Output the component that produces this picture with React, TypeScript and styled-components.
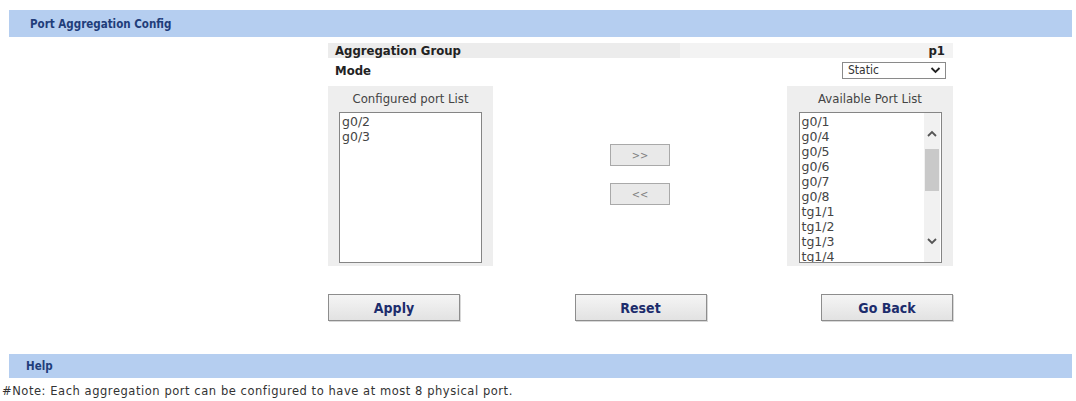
import React from 'react';
import styled, { createGlobalStyle } from 'styled-components';

const GlobalStyle = createGlobalStyle`
  body {
    margin: 0;
    background: #fff;
    font-family: "DejaVu Sans Condensed", "DejaVu Sans", sans-serif;
    color: #222;
  }
`;

const Page = styled.div`
  padding-top: 10px;
`;

const SectionBar = styled.div<{ $indent: number; $height: number }>`
  display: flex;
  align-items: center;
  height: ${(p) => p.$height}px;
  margin: 0 4px 0 9px;
  padding-left: ${(p) => p.$indent}px;
  background: #b5cef0;
  color: #1f3d7a;
  font-size: 11.5px;
  font-weight: bold;
`;

const Form = styled.div`
  width: 625px;
  margin-left: 328px;
`;

const InfoRow = styled.div`
  display: flex;
  height: 15px;
  margin-top: 6px;
  font-size: 13px;
  font-weight: bold;
  line-height: 15px;
`;

const LabelCell = styled.div`
  flex: 0 0 345px;
  padding-left: 7px;
  background: #ececec;
`;

const ValueCell = styled.div`
  flex: 1;
  padding-right: 8px;
  text-align: right;
  background: #f3f3f3;
`;

const ModeRow = styled.div`
  display: flex;
  justify-content: space-between;
  align-items: flex-start;
  padding: 0 7px;
  font-size: 13px;
  font-weight: bold;
  line-height: 15px;
`;

const ModeLabel = styled.span`
  padding-top: 5px;
`;

const Select = styled.div`
  display: flex;
  align-items: center;
  justify-content: space-between;
  box-sizing: border-box;
  width: 104px;
  height: 17px;
  margin-top: 4px;
  padding: 0 4px 0 5px;
  border: 1px solid #8a8a8a;
  background: #fff;
  font-size: 12px;
  font-weight: normal;
  color: #333;
`;

const ListsArea = styled.div`
  display: grid;
  grid-template-columns: 165px 1fr 166px;
  margin-top: 7px;
`;

const Panel = styled.div`
  display: flex;
  flex-direction: column;
  align-items: center;
  height: 180px;
  background: #eeeeee;
`;

const PanelTitle = styled.div`
  height: 26px;
  line-height: 26px;
  font-size: 13px;
  color: #444;
`;

const ListBox = styled.div`
  display: flex;
  box-sizing: border-box;
  width: 143px;
  height: 151px;
  border: 1px solid #858585;
  background: #fff;
  overflow: hidden;
`;

const Items = styled.div`
  flex: 1;
  padding: 1px 0 0 2px;
  font-family: "DejaVu Sans", sans-serif;
  font-size: 12.5px;
  line-height: 15px;
  color: #444;
`;

const ScrollTrack = styled.div`
  display: flex;
  flex-direction: column;
  align-items: center;
  width: 16px;
  margin-right: 1px;
  background: #f1f1f1;
`;

const ArrowSlot = styled.div<{ $top: number; $bottom: number }>`
  display: flex;
  justify-content: center;
  padding: ${(p) => p.$top}px 0 ${(p) => p.$bottom}px;
`;

const Thumb = styled.div`
  width: 14px;
  height: 42px;
  background: #c9c9c9;
`;

const Spacer = styled.div`
  flex: 1;
`;

const MoveColumn = styled.div`
  display: flex;
  flex-direction: column;
  align-items: center;
  gap: 17px;
  padding-top: 58px;
`;

const MoveButton = styled.button`
  width: 60px;
  height: 22px;
  padding: 0;
  border: 1px solid #a9a9a9;
  background: #e9e9e9;
  color: #808080;
  font-family: "DejaVu Sans Condensed", "DejaVu Sans", sans-serif;
  font-size: 11px;
`;

const ActionRow = styled.div`
  display: flex;
  justify-content: space-between;
  margin-top: 28px;
`;

const ActionButton = styled.button`
  width: 132px;
  height: 27px;
  padding: 0;
  border: 1px solid #8d8d8d;
  background: linear-gradient(#f5f5f5, #e2e2e2);
  box-shadow: 1px 1px 0 #d8d8d8;
  color: #1c2c6c;
  font-family: "DejaVu Sans Condensed", "DejaVu Sans", sans-serif;
  font-size: 14px;
  font-weight: bold;
`;

const HelpWrap = styled.div`
  margin-top: 33px;
`;

const Note = styled.div`
  padding: 6px 0 0 2px;
  font-family: "DejaVu Sans", sans-serif;
  font-size: 11.5px;
  letter-spacing: 0.55px;
  color: #333;
`;

const Chevron = ({ up, color = '#555', width = 10 }: { up?: boolean; color?: string; width?: number }) => (
  <svg width={width} height={7} viewBox="0 0 10 7">
    <path
      d={up ? 'M1 6 L5 2 L9 6' : 'M1 1 L5 5 L9 1'}
      fill="none"
      stroke={color}
      strokeWidth={1.8}
    />
  </svg>
);

const configured = ['g0/2', 'g0/3'];
const available = ['g0/1', 'g0/4', 'g0/5', 'g0/6', 'g0/7', 'g0/8', 'tg1/1', 'tg1/2', 'tg1/3', 'tg1/4'];

const App = () => {
  return (
    <Page>
      <GlobalStyle />
      <SectionBar $indent={21} $height={27}>Port Aggregation Config</SectionBar>
      <Form>
        <InfoRow>
          <LabelCell>Aggregation Group</LabelCell>
          <ValueCell>p1</ValueCell>
        </InfoRow>
        <ModeRow>
          <ModeLabel>Mode</ModeLabel>
          <Select>
            <span>Static</span>
            <Chevron color="#222" width={11} />
          </Select>
        </ModeRow>
        <ListsArea>
          <Panel>
            <PanelTitle>Configured port List</PanelTitle>
            <ListBox>
              <Items>
                {configured.map((p) => (
                  <div key={p}>{p}</div>
                ))}
              </Items>
            </ListBox>
          </Panel>
          <MoveColumn>
            <MoveButton>&gt;&gt;</MoveButton>
            <MoveButton>&lt;&lt;</MoveButton>
          </MoveColumn>
          <Panel>
            <PanelTitle>Available Port List</PanelTitle>
            <ListBox>
              <Items>
                {available.map((p) => (
                  <div key={p}>{p}</div>
                ))}
              </Items>
              <ScrollTrack>
                <ArrowSlot $top={17} $bottom={12}>
                  <Chevron up />
                </ArrowSlot>
                <Thumb />
                <Spacer />
                <ArrowSlot $top={0} $bottom={17}>
                  <Chevron />
                </ArrowSlot>
              </ScrollTrack>
            </ListBox>
          </Panel>
        </ListsArea>
        <ActionRow>
          <ActionButton>Apply</ActionButton>
          <ActionButton>Reset</ActionButton>
          <ActionButton>Go Back</ActionButton>
        </ActionRow>
      </Form>
      <HelpWrap>
        <SectionBar $indent={17} $height={24}>Help</SectionBar>
      </HelpWrap>
      <Note>#Note: Each aggregation port can be configured to have at most 8 physical port.</Note>
    </Page>
  );
};

export default App;
